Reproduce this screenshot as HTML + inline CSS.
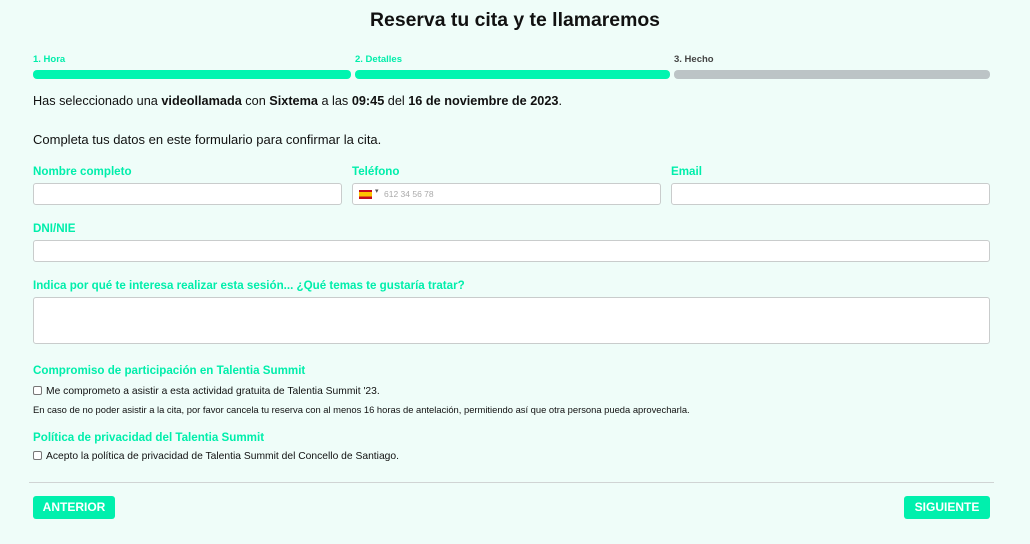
<!DOCTYPE html>
<html><head><meta charset="utf-8"><style>
*{box-sizing:border-box;margin:0;padding:0}
body{width:1030px;height:544px;background:#effdf9;font-family:"Liberation Sans",sans-serif;color:#111;position:relative;overflow:hidden}
.a{position:absolute;white-space:nowrap}
.g{color:#00eeab;font-weight:bold;font-size:11.6px}
.bar{position:absolute;top:70px;height:9px;border-radius:4px}
.in{position:absolute;height:22px;background:#fff;border:1px solid #c9cccc;border-radius:3px}
.cb{display:inline-block;width:9px;height:9px;border:1px solid #777;border-radius:2px;background:#fff;vertical-align:-1px;margin-right:4px}
.btn{position:absolute;top:496px;height:23px;background:#00f0ad;border-radius:3px;color:#fff;font-weight:bold;font-size:12px;text-align:center;line-height:23px}
</style></head><body>
<div class="a" style="left:0;width:1030px;text-align:center;top:9px;font-size:19.4px;font-weight:bold">Reserva tu cita y te llamaremos</div>
<div class="a g" style="left:33px;top:54px;font-size:9.5px">1. Hora</div>
<div class="a g" style="left:355px;top:54px;font-size:9.5px">2. Detalles</div>
<div class="a" style="left:674px;top:54px;font-size:9.5px;color:#444;font-weight:bold">3. Hecho</div>
<div class="bar" style="left:33px;width:318px;background:#00f5b0"></div>
<div class="bar" style="left:355px;width:315px;background:#00f5b0"></div>
<div class="bar" style="left:674px;width:316px;background:#bcc4c6"></div>
<div class="a" style="left:33px;top:94px;font-size:12.7px">Has seleccionado una <b>videollamada</b> con <b>Sixtema</b> a las <b>09:45</b> del <b>16 de noviembre de 2023</b>.</div>
<div class="a" style="left:33px;top:132px;font-size:13px">Completa tus datos en este formulario para confirmar la cita.</div>
<div class="a g" style="left:33px;top:165px">Nombre completo</div>
<div class="a g" style="left:352px;top:165px">Teléfono</div>
<div class="a g" style="left:671px;top:165px">Email</div>
<div class="in" style="left:33px;top:183px;width:309px"></div>
<div class="in" style="left:352px;top:183px;width:309px"><span style="position:absolute;left:6px;top:6px;width:13px;height:9px;background:linear-gradient(#c60b1e 25%,#ffc400 25%,#ffc400 75%,#c60b1e 75%)"></span><span style="position:absolute;left:22px;top:3px;font-size:7px;color:#555">▾</span><span style="position:absolute;left:31px;top:5px;font-size:8.5px;color:#aaa">612 34 56 78</span></div>
<div class="in" style="left:671px;top:183px;width:319px"></div>
<div class="a g" style="left:33px;top:222px">DNI/NIE</div>
<div class="in" style="left:33px;top:240px;width:957px"></div>
<div class="a g" style="left:33px;top:279px">Indica por qué te interesa realizar esta sesión... ¿Qué temas te gustaría tratar?</div>
<div class="in" style="left:33px;top:297px;width:957px;height:47px"></div>
<div class="a g" style="left:33px;top:364px">Compromiso de participación en Talentia Summit</div>
<div class="a" style="left:33px;top:386px;font-size:10.3px"><span class="cb"></span>Me comprometo a asistir a esta actividad gratuita de Talentia Summit '23.</div>
<div class="a" style="left:33px;top:404px;font-size:9.4px">En caso de no poder asistir a la cita, por favor cancela tu reserva con al menos 16 horas de antelación, permitiendo así que otra persona pueda aprovecharla.</div>
<div class="a g" style="left:33px;top:431px">Política de privacidad del Talentia Summit</div>
<div class="a" style="left:33px;top:451px;font-size:10.3px"><span class="cb"></span>Acepto la política de privacidad de Talentia Summit del Concello de Santiago.</div>
<div class="a" style="left:29px;top:482px;width:965px;height:1px;background:#d0d4d4"></div>
<div class="btn" style="left:33px;width:82px">ANTERIOR</div>
<div class="btn" style="left:904px;width:86px">SIGUIENTE</div>
</body></html>
